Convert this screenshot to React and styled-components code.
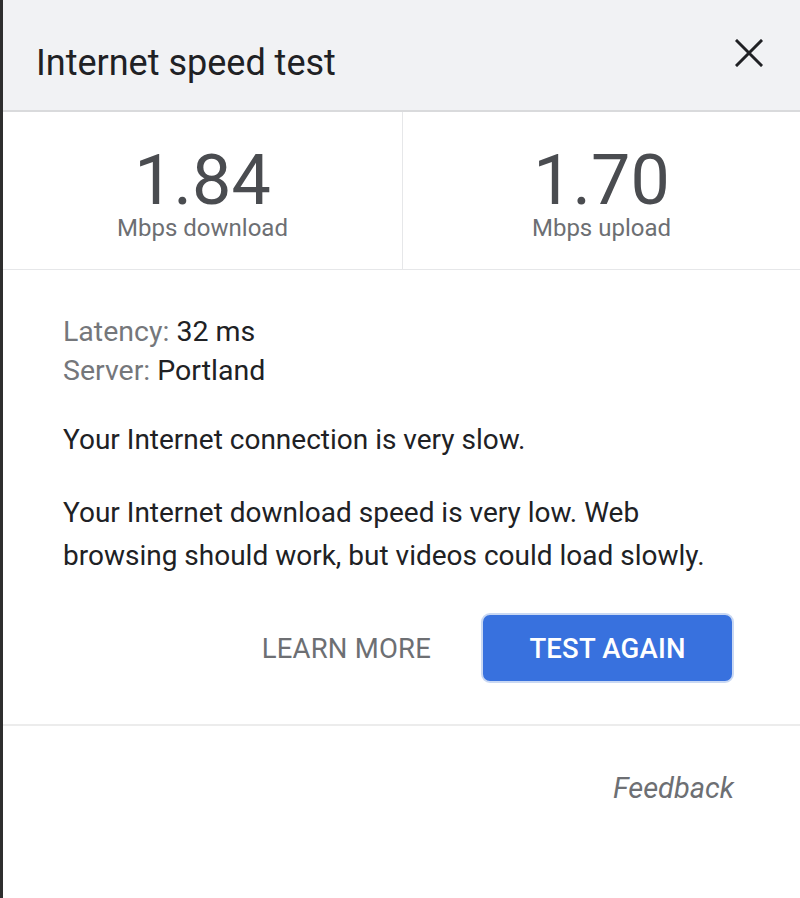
import React from "react";
import styled, { createGlobalStyle } from "styled-components";

const Global = createGlobalStyle`
  html, body { margin: 0; padding: 0; }
  body { font-family: Roboto, "Liberation Sans", Arial, sans-serif; background: #2e2e2e; }
  * { box-sizing: border-box; }
`;

const Page = styled.div`
  display: flex;
  min-height: 898px;
  background: #2e2e2e;
`;

const Dialog = styled.div`
  flex: 1;
  margin-left: 3px;
  background: #ffffff;
  display: flex;
  flex-direction: column;
`;

const Header = styled.header`
  height: 112px;
  display: flex;
  align-items: center;
  justify-content: space-between;
  padding: 0 37px 0 33px;
  background: #f1f2f4;
  border-bottom: 2px solid #d9dadc;
`;

const Title = styled.h1`
  margin: 16px 0 0;
  font-size: 36px;
  font-weight: 400;
  color: #202124;
`;

const CloseButton = styled.button`
  border: 0;
  background: none;
  padding: 0;
  margin: 0 0 4px;
  width: 28px;
  height: 28px;
  display: flex;
  cursor: pointer;
`;

const Stats = styled.section`
  display: grid;
  grid-template-columns: 400px 1fr;
  height: 158px;
  border-bottom: 1px solid #e6e7e9;
`;

const Stat = styled.div`
  display: flex;
  flex-direction: column;
  align-items: center;
  padding-top: 31px;
  border-right: ${(p) => (p.$divider ? "1px solid #e6e7e9" : "none")};
`;

const Value = styled.div`
  font-size: 70px;
  line-height: 74px;
  color: #4a4c50;
`;

const Unit = styled.div`
  margin-top: 3px;
  font-size: 24px;
  line-height: 16px;
  color: #6d6f73;
`;

const Body = styled.section`
  padding: 42px 66px 0 60px;
  display: flex;
  flex-direction: column;
`;

const InfoLine = styled.div`
  font-size: 28.5px;
  line-height: 39px;
  color: #202124;
`;

const Label = styled.span`
  color: #75777b;
`;

const Paragraph = styled.p`
  margin: ${(p) => p.$top}px 0 0;
  font-size: 28px;
  line-height: 43px;
  color: #202124;
`;

const Actions = styled.div`
  display: flex;
  justify-content: flex-end;
  align-items: center;
  gap: 50px;
  margin-top: 36px;
`;

const TextButton = styled.button`
  border: 0;
  background: none;
  padding: 0;
  font-family: inherit;
  font-size: 27.5px;
  color: #6d6f73;
  letter-spacing: 0.2px;
`;

const PrimaryButton = styled.button`
  height: 70px;
  width: 253px;
  border-radius: 9px;
  border: 2px solid #c9d8f3;
  background: #3871de;
  color: #ffffff;
  font-family: inherit;
  font-size: 27.5px;
  font-weight: 500;
  letter-spacing: 0.2px;
`;

const Divider = styled.hr`
  margin: 41px 0 0;
  border: 0;
  border-top: 2px solid #ececec;
`;

const Footer = styled.footer`
  display: flex;
  justify-content: flex-end;
  padding: 45px 66px 0 0;
`;

const Feedback = styled.a`
  font-size: 29px;
  font-style: italic;
  color: #6d6f73;
  text-decoration: none;
`;

export default function App() {
  return (
    <>
      <Global />
      <Page>
        <Dialog>
          <Header>
            <Title>Internet speed test</Title>
            <CloseButton aria-label="Close">
              <svg width="28" height="28" viewBox="0 0 28 28">
                <path d="M2 2 L26 26 M26 2 L2 26" stroke="#202124" strokeWidth="3" strokeLinecap="square" />
              </svg>
            </CloseButton>
          </Header>
          <Stats>
            <Stat $divider>
              <Value>1.84</Value>
              <Unit>Mbps download</Unit>
            </Stat>
            <Stat>
              <Value>1.70</Value>
              <Unit>Mbps upload</Unit>
            </Stat>
          </Stats>
          <Body>
            <InfoLine>
              <Label>Latency:</Label> 32 ms
            </InfoLine>
            <InfoLine>
              <Label>Server:</Label> Portland
            </InfoLine>
            <Paragraph $top={28}>Your Internet connection is very slow.</Paragraph>
            <Paragraph $top={30}>
              Your Internet download speed is very low. Web browsing should work, but videos could load slowly.
            </Paragraph>
            <Actions>
              <TextButton>LEARN MORE</TextButton>
              <PrimaryButton>TEST AGAIN</PrimaryButton>
            </Actions>
          </Body>
          <Divider />
          <Footer>
            <Feedback href="#">Feedback</Feedback>
          </Footer>
        </Dialog>
      </Page>
    </>
  );
}
